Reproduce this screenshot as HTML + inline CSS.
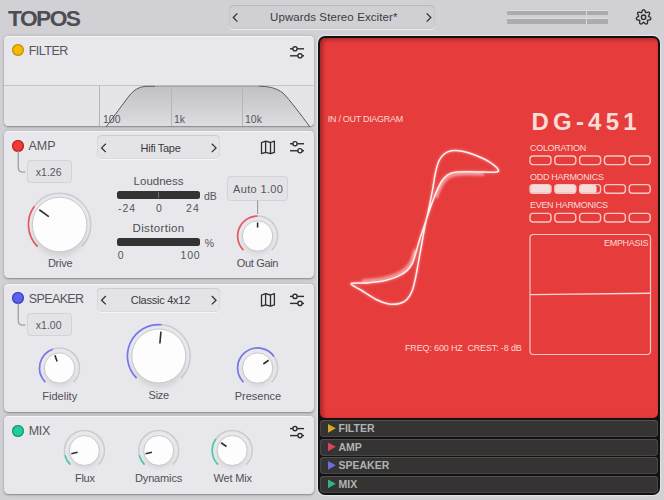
<!DOCTYPE html>
<html><head><meta charset="utf-8">
<style>
*{box-sizing:border-box;margin:0;padding:0}
html,body{width:664px;height:500px;overflow:hidden}
body{background:#d1d1d5;font-family:"Liberation Sans",sans-serif;color:#4e4e54;position:relative}
.a{position:absolute}
.t{position:absolute;white-space:nowrap;line-height:1}
.panel{position:absolute;left:4px;width:309.5px;background:#e8e8ec;border-radius:4.5px;box-shadow:0 1px 1.5px rgba(0,0,0,0.24),0 0.5px 3.5px rgba(0,0,0,0.16),inset 0 1px 0 rgba(255,255,255,0.55)}
.sel{position:absolute;border-radius:4.5px;background:#e4e4e8;box-shadow:inset 0 1px 1px rgba(0,0,0,0.07),inset 0 0 0 1px rgba(0,0,0,0.045),0 1px 0 rgba(255,255,255,0.6)}
.vbox{position:absolute;border-radius:4px;background:#e4e4e8;box-shadow:inset 0 0 0 1px rgba(0,0,0,0.07)}
.dot{position:absolute;width:12px;height:12px;border-radius:50%}
.hdr{font-size:12.5px;color:#55555b}
.lbl{font-size:11px;color:#4f4f55}
.num{font-size:10.5px;color:#55555b}
.red{position:absolute;left:320px;top:38px;width:338px;height:380px;background:#e73c3c;border-radius:5px;box-shadow:inset 2.5px 1.5px 4px rgba(60,0,0,0.4)}
.rt{position:absolute;white-space:nowrap;line-height:1;color:#fbdad4;font-size:9px;letter-spacing:-0.3px}
.bar{position:absolute;left:320px;width:338px;height:17px;background:#353433;border-radius:4px;box-shadow:inset 0 1px 0 #505052,inset 0 0 0 1px #464648}
.bt{position:absolute;left:338.5px;font-size:10.5px;font-weight:bold;color:#b2b2b4;line-height:1;white-space:nowrap}
.meter{position:absolute;left:117.3px;width:82.6px;height:8px;background:#333333;border-radius:2.5px}
</style></head><body>

<!-- top bar -->
<div class="t" style="left:8px;top:6.7px;font-size:22.8px;font-weight:bold;color:#4d4d53;letter-spacing:-1.6px">TOPOS</div>
<div class="sel" style="left:229px;top:5.2px;width:205.5px;height:23.5px;background:#d0d0d4"></div>
<div class="t" style="left:270px;top:12px;font-size:11.5px;color:#3a3a40;letter-spacing:0.1px">Upwards Stereo Exciter*</div>

<!-- meters -->
<div class="a" style="left:507.3px;top:10.8px;width:101px;height:4.3px;background:#acacb0;box-shadow:0 -0.7px 0 rgba(255,255,255,0.35)"></div>
<div class="a" style="left:507.3px;top:19.3px;width:101px;height:4.3px;background:#acacb0;box-shadow:0 -0.7px 0 rgba(255,255,255,0.35)"></div>
<div class="a" style="left:586.1px;top:10.8px;width:0.7px;height:12.8px;background:#d8d8dc"></div>

<!-- FILTER panel -->
<div class="panel" style="top:35.7px;height:90.3px;overflow:hidden">
  <div class="a" style="left:0;top:49.8px;width:309.5px;height:41px;background:#e5e5e9;border-top:1px solid #c4c4c8"></div>
</div>
<svg class="a" style="left:0;top:0" width="664" height="500" viewBox="0 0 664 500"><defs><linearGradient id="fg" x1="0" y1="0" x2="0" y2="1">
<stop offset="0" stop-color="#000" stop-opacity="0.16"/><stop offset="1" stop-color="#000" stop-opacity="0.03"/></linearGradient></defs>
<path d="M106 127 L126 100 C131 93 136 87 146 86.3 L261 86.3 C270 86.5 277 88.5 283 93 C290 100 301 115 310 127 Z" fill="url(#fg)"/>
<path d="M155 86.3 L259 86.3" fill="none" stroke="#9a9a9f" stroke-width="1"/><path d="M106 127 L126 100 C131 93 136 87 146 86.3 L155 86.3" fill="none" stroke="#5a5a60" stroke-width="1"/><path d="M259 86.2 L261 86.3 C270 86.5 277 88.5 283 93 C290 100 301 115 310 127" fill="none" stroke="#5a5a60" stroke-width="1"/>
<g stroke="#b6b6ba" stroke-width="1"><line x1="99.5" y1="86" x2="99.5" y2="126"/><line x1="171.5" y1="86" x2="171.5" y2="126"/><line x1="242.5" y1="86" x2="242.5" y2="126"/></g></svg>
<div class="dot" style="left:12.3px;top:44.4px;background:#f7ba00;box-shadow:inset 0 0 0 1.3px #c29410"></div>
<div class="t hdr" style="left:28.7px;top:45.3px;letter-spacing:-0.5px">FILTER</div>
<div class="t num" style="left:103px;top:114px">100</div>
<div class="t num" style="left:174px;top:114px">1k</div>
<div class="t num" style="left:245px;top:114px">10k</div>

<!-- AMP panel -->
<div class="panel" style="top:131px;height:146.8px"></div>
<div class="dot" style="left:12.4px;top:139.6px;background:#f23a3a;box-shadow:inset 0 0 0 1.3px #bf2727"></div>
<div class="t hdr" style="left:28.5px;top:140px">AMP</div>
<div class="sel" style="left:97.4px;top:135.3px;width:122.3px;height:23.6px"></div>
<div class="t" style="left:140.6px;top:143px;font-size:11px;color:#3a3a40;letter-spacing:-0.3px">Hifi Tape</div>
<div class="vbox" style="left:26.5px;top:160px;width:45px;height:23px"></div>
<div class="t num" style="left:35.8px;top:167px">x1.26</div>
<div class="t lbl" style="left:133.6px;top:176px;font-size:11.5px">Loudness</div>
<div class="meter" style="top:190.8px"></div>
<div class="a" style="left:158px;top:191.5px;width:1px;height:6.5px;background:#6a6a6e"></div>
<div class="t num" style="left:204px;top:190.5px">dB</div>
<div class="t num" style="left:118px;top:203px;letter-spacing:1px">-24</div>
<div class="t num" style="left:156px;top:203px">0</div>
<div class="t num" style="left:186px;top:203px;letter-spacing:1.2px">24</div>
<div class="t lbl" style="left:132.5px;top:223px;font-size:11.5px;letter-spacing:0.35px">Distortion</div>
<div class="meter" style="top:238.3px"></div>
<div class="t num" style="left:204.8px;top:237.8px">%</div>
<div class="t num" style="left:117.7px;top:250px">0</div>
<div class="t num" style="left:180.5px;top:250px;letter-spacing:0.8px">100</div>
<div class="vbox" style="left:227.3px;top:176.3px;width:61px;height:24.3px"></div>
<div class="t num" style="left:233px;top:184px;font-size:11px;letter-spacing:0.35px">Auto 1.00</div>
<div class="t lbl" style="left:47.9px;top:258px;letter-spacing:-0.25px">Drive</div>
<div class="t lbl" style="left:236.8px;top:258px;letter-spacing:-0.35px">Out Gain</div>

<!-- SPEAKER panel -->
<div class="panel" style="top:284px;height:127.5px"></div>
<div class="dot" style="left:12.4px;top:292px;background:#5e62f2;box-shadow:inset 0 0 0 1.3px #4044bb"></div>
<div class="t hdr" style="left:28.7px;top:292.5px;letter-spacing:-0.6px">SPEAKER</div>
<div class="sel" style="left:97.4px;top:288.3px;width:122.3px;height:23.6px"></div>
<div class="t" style="left:130.7px;top:295px;font-size:11px;color:#3a3a40;letter-spacing:-0.25px">Classic 4x12</div>
<div class="vbox" style="left:26.5px;top:313.2px;width:45px;height:23px"></div>
<div class="t num" style="left:35.8px;top:319.5px">x1.00</div>
<div class="t lbl" style="left:42.3px;top:390.5px">Fidelity</div>
<div class="t lbl" style="left:148.6px;top:390px;letter-spacing:-0.3px">Size</div>
<div class="t lbl" style="left:234.7px;top:390.5px">Presence</div>

<!-- MIX panel -->
<div class="panel" style="top:416px;height:78px"></div>
<div class="dot" style="left:12.4px;top:424.8px;background:#25cc9e;box-shadow:inset 0 0 0 1.3px #179a76"></div>
<div class="t hdr" style="left:28.7px;top:425.3px;letter-spacing:-0.3px">MIX</div>
<div class="t lbl" style="left:75px;top:473px;letter-spacing:-0.3px">Flux</div>
<div class="t lbl" style="left:135px;top:473px;letter-spacing:-0.15px">Dynamics</div>
<div class="t lbl" style="left:213.4px;top:473px;letter-spacing:-0.15px">Wet Mix</div>

<svg class="a" style="left:0;top:0" width="664" height="500" viewBox="0 0 664 500">
<defs><filter id="blur" x="-50%" y="-50%" width="200%" height="200%"><feGaussianBlur stdDeviation="2"/></filter>
<filter id="blur2" x="-20%" y="-20%" width="140%" height="140%"><feGaussianBlur stdDeviation="1.2"/></filter></defs>
<polygon points="643.60,9.80 643.89,9.83 644.17,9.93 644.44,10.10 644.69,10.34 644.90,10.68 645.04,11.20 645.22,11.47 645.35,11.82 645.46,12.17 645.56,12.46 645.70,12.65 645.88,12.73 646.12,12.70 646.42,12.59 646.77,12.46 647.12,12.35 647.43,12.34 647.95,12.10 648.34,12.07 648.67,12.13 648.96,12.24 649.21,12.41 649.41,12.62 649.56,12.87 649.65,13.16 649.68,13.48 649.63,13.82 649.48,14.21 649.19,14.62 649.07,14.94 648.87,15.26 648.67,15.55 648.52,15.81 648.47,16.03 648.54,16.22 648.73,16.39 649.01,16.56 649.33,16.75 649.63,16.96 649.80,17.20 650.34,17.46 650.59,17.75 650.75,18.05 650.83,18.35 650.84,18.64 650.79,18.93 650.68,19.20 650.50,19.44 650.26,19.66 649.95,19.83 649.53,19.93 649.06,19.98 648.73,20.07 648.35,20.11 648.00,20.14 647.72,20.19 647.53,20.30 647.44,20.48 647.43,20.74 647.48,21.08 647.53,21.45 647.54,21.81 647.54,22.20 647.59,22.70 647.51,23.06 647.37,23.35 647.18,23.60 646.96,23.79 646.70,23.92 646.41,23.99 646.11,23.99 645.79,23.93 645.46,23.78 645.11,23.48 644.79,23.18 644.51,22.96 644.25,22.69 644.01,22.44 643.80,22.26 643.60,22.20 643.40,22.26 643.19,22.44 642.95,22.69 642.69,22.96 642.41,23.18 642.09,23.48 641.74,23.78 641.41,23.93 641.09,23.99 640.79,23.99 640.50,23.92 640.24,23.79 640.02,23.60 639.83,23.35 639.69,23.06 639.61,22.70 639.66,22.20 639.66,21.81 639.67,21.45 639.72,21.08 639.77,20.74 639.76,20.48 639.67,20.30 639.48,20.19 639.20,20.14 638.85,20.11 638.47,20.07 638.14,19.98 637.67,19.93 637.25,19.83 636.94,19.66 636.70,19.44 636.52,19.20 636.41,18.93 636.36,18.64 636.37,18.35 636.45,18.05 636.61,17.75 636.86,17.46 637.40,17.20 637.57,16.96 637.87,16.75 638.19,16.56 638.47,16.39 638.66,16.22 638.73,16.03 638.68,15.81 638.53,15.55 638.33,15.26 638.13,14.94 638.01,14.62 637.72,14.21 637.57,13.82 637.52,13.48 637.55,13.16 637.64,12.87 637.79,12.62 637.99,12.41 638.24,12.24 638.53,12.13 638.86,12.07 639.25,12.10 639.77,12.34 640.08,12.35 640.43,12.46 640.78,12.59 641.08,12.70 641.32,12.73 641.50,12.65 641.64,12.46 641.74,12.17 641.85,11.82 641.98,11.47 642.16,11.20 642.30,10.68 642.51,10.34 642.76,10.10 643.03,9.93 643.31,9.83" fill="none" stroke="#2e2e32" stroke-width="1.35" stroke-linejoin="round"/><circle cx="643.6" cy="17.2" r="2.2" fill="none" stroke="#2e2e32" stroke-width="1.35"/>
<path d="M37.54 246.56A31.2 31.2 0 1 1 81.66 246.56" fill="none" stroke="#cbcbcf" stroke-width="1.5"/>
<path d="M37.54 246.56A31.2 31.2 0 0 1 34.36 206.16" fill="none" stroke="#e65a60" stroke-width="1.65"/>
<circle cx="59.6" cy="229.96" r="27.30" fill="rgba(0,0,0,0.08)" filter="url(#blur)"/>
<circle cx="59.6" cy="224.5" r="27.3" fill="#fdfdfd" stroke="#c8c8cc" stroke-width="1"/>
<line x1="48.84" y1="216.68" x2="39.29" y2="209.75" stroke="#2e2e32" stroke-width="1.6" stroke-linecap="butt"/>
<path d="M243.46 250.14A20 20 0 1 1 271.74 250.14" fill="none" stroke="#cbcbcf" stroke-width="1.5"/>
<path d="M243.46 250.14A20 20 0 0 1 257.60 216.00" fill="none" stroke="#e65a60" stroke-width="1.65"/>
<circle cx="257.6" cy="239.04" r="15.20" fill="rgba(0,0,0,0.08)" filter="url(#blur)"/>
<circle cx="257.6" cy="236" r="15.2" fill="#fdfdfd" stroke="#c8c8cc" stroke-width="1"/>
<line x1="257.60" y1="227.50" x2="257.60" y2="222.50" stroke="#2e2e32" stroke-width="1.6" stroke-linecap="butt"/>
<path d="M45.36 382.14A20 20 0 1 1 73.64 382.14" fill="none" stroke="#cbcbcf" stroke-width="1.5"/>
<path d="M45.36 382.14A20 20 0 0 1 52.66 349.21" fill="none" stroke="#7477ee" stroke-width="1.65"/>
<circle cx="59.5" cy="371.04" r="15.20" fill="rgba(0,0,0,0.08)" filter="url(#blur)"/>
<circle cx="59.5" cy="368" r="15.2" fill="#fdfdfd" stroke="#c8c8cc" stroke-width="1"/>
<line x1="57.11" y1="361.42" x2="54.88" y2="355.31" stroke="#2e2e32" stroke-width="1.6" stroke-linecap="butt"/>
<path d="M136.60 378.20A31.4 31.4 0 1 1 181.00 378.20" fill="none" stroke="#cbcbcf" stroke-width="1.5"/>
<path d="M136.60 378.20A31.4 31.4 0 0 1 161.54 324.72" fill="none" stroke="#7477ee" stroke-width="1.65"/>
<circle cx="158.8" cy="361.40" r="27.00" fill="rgba(0,0,0,0.08)" filter="url(#blur)"/>
<circle cx="158.8" cy="356" r="27" fill="#fdfdfd" stroke="#c8c8cc" stroke-width="1"/>
<line x1="159.89" y1="343.55" x2="160.94" y2="331.59" stroke="#2e2e32" stroke-width="1.6" stroke-linecap="butt"/>
<path d="M243.46 382.14A20 20 0 1 1 271.74 382.14" fill="none" stroke="#cbcbcf" stroke-width="1.5"/>
<path d="M243.46 382.14A20 20 0 1 1 273.98 356.53" fill="none" stroke="#7477ee" stroke-width="1.65"/>
<circle cx="257.6" cy="371.04" r="15.20" fill="rgba(0,0,0,0.08)" filter="url(#blur)"/>
<circle cx="257.6" cy="368" r="15.2" fill="#fdfdfd" stroke="#c8c8cc" stroke-width="1"/>
<line x1="263.33" y1="363.98" x2="268.66" y2="360.26" stroke="#2e2e32" stroke-width="1.6" stroke-linecap="butt"/>
<path d="M70.26 464.64A20 20 0 1 1 98.54 464.64" fill="none" stroke="#cbcbcf" stroke-width="1.5"/>
<path d="M70.26 464.64A20 20 0 0 1 64.99 455.34" fill="none" stroke="#48cba8" stroke-width="1.65"/>
<circle cx="84.4" cy="453.50" r="15.00" fill="rgba(0,0,0,0.08)" filter="url(#blur)"/>
<circle cx="84.4" cy="450.5" r="15" fill="#fdfdfd" stroke="#c8c8cc" stroke-width="1"/>
<line x1="77.61" y1="452.19" x2="71.30" y2="453.77" stroke="#2e2e32" stroke-width="1.6" stroke-linecap="butt"/>
<path d="M144.56 464.64A20 20 0 1 1 172.84 464.64" fill="none" stroke="#cbcbcf" stroke-width="1.5"/>
<path d="M144.56 464.64A20 20 0 0 1 139.29 455.34" fill="none" stroke="#48cba8" stroke-width="1.65"/>
<circle cx="158.7" cy="453.50" r="15.00" fill="rgba(0,0,0,0.08)" filter="url(#blur)"/>
<circle cx="158.7" cy="450.5" r="15" fill="#fdfdfd" stroke="#c8c8cc" stroke-width="1"/>
<line x1="151.91" y1="452.19" x2="145.60" y2="453.77" stroke="#2e2e32" stroke-width="1.6" stroke-linecap="butt"/>
<path d="M218.06 464.64A20 20 0 1 1 246.34 464.64" fill="none" stroke="#cbcbcf" stroke-width="1.5"/>
<path d="M218.06 464.64A20 20 0 0 1 215.82 439.03" fill="none" stroke="#48cba8" stroke-width="1.65"/>
<circle cx="232.2" cy="453.50" r="15.00" fill="rgba(0,0,0,0.08)" filter="url(#blur)"/>
<circle cx="232.2" cy="450.5" r="15" fill="#fdfdfd" stroke="#c8c8cc" stroke-width="1"/>
<line x1="226.47" y1="446.48" x2="221.14" y2="442.76" stroke="#2e2e32" stroke-width="1.6" stroke-linecap="butt"/>
<g stroke="#2e2e32" stroke-width="1.4" fill="#f6f6f8">
<line x1="290" y1="48.8" x2="304" y2="48.8"/><line x1="290" y1="55.8" x2="304" y2="55.8"/>
<circle cx="295" cy="48.8" r="2.1"/><circle cx="300" cy="55.8" r="2.1"/></g>
<g stroke="#2e2e32" stroke-width="1.4" fill="#f6f6f8">
<line x1="290" y1="143.75" x2="304" y2="143.75"/><line x1="290" y1="150.75" x2="304" y2="150.75"/>
<circle cx="295" cy="143.75" r="2.1"/><circle cx="300" cy="150.75" r="2.1"/></g>
<g stroke="#2e2e32" stroke-width="1.4" fill="#f6f6f8">
<line x1="290" y1="296.4" x2="304" y2="296.4"/><line x1="290" y1="303.4" x2="304" y2="303.4"/>
<circle cx="295" cy="296.4" r="2.1"/><circle cx="300" cy="303.4" r="2.1"/></g>
<g stroke="#2e2e32" stroke-width="1.4" fill="#f6f6f8">
<line x1="290" y1="428.6" x2="304" y2="428.6"/><line x1="290" y1="435.6" x2="304" y2="435.6"/>
<circle cx="295" cy="428.6" r="2.1"/><circle cx="300" cy="435.6" r="2.1"/></g>
<g stroke="#2e2e32" stroke-width="1.3" fill="none" stroke-linejoin="round"><polygon points="261.50,142.60 265.60,141.20 270.50,142.50 274.40,141.20 274.40,152.40 270.50,153.60 265.60,152.40 261.50,153.60"/><line x1="265.60" y1="141.20" x2="265.60" y2="152.40"/><line x1="270.50" y1="142.50" x2="270.50" y2="153.60"/></g>
<g stroke="#2e2e32" stroke-width="1.3" fill="none" stroke-linejoin="round"><polygon points="261.50,295.10 265.60,293.70 270.50,295.00 274.40,293.70 274.40,304.90 270.50,306.10 265.60,304.90 261.50,306.10"/><line x1="265.60" y1="293.70" x2="265.60" y2="304.90"/><line x1="270.50" y1="295.00" x2="270.50" y2="306.10"/></g>
<polyline points="237.40,13.40 233.30,17.50 237.40,21.60" fill="none" stroke="#333338" stroke-width="1.3"/>
<polyline points="426.70,13.40 430.80,17.50 426.70,21.60" fill="none" stroke="#333338" stroke-width="1.3"/>
<polyline points="105.80,143.70 101.60,147.90 105.80,152.10" fill="none" stroke="#333338" stroke-width="1.3"/>
<polyline points="211.80,143.70 216.00,147.90 211.80,152.10" fill="none" stroke="#333338" stroke-width="1.3"/>
<polyline points="105.80,296.00 101.60,300.20 105.80,304.40" fill="none" stroke="#333338" stroke-width="1.3"/>
<polyline points="211.80,296.00 216.00,300.20 211.80,304.40" fill="none" stroke="#333338" stroke-width="1.3"/>
<path d="M18.3 151 V167.5 Q18.3 172.2 23 172.2 H25.5" fill="none" stroke="#a2a2a6" stroke-width="1.3"/>
<path d="M18.3 303.5 V320.5 Q18.3 325.2 23 325.2 H25.5" fill="none" stroke="#a2a2a6" stroke-width="1.3"/>
<line x1="257.6" y1="200.5" x2="257.6" y2="214" stroke="#9a9aa0" stroke-width="1.1"/>
</svg>

<!-- right display -->
<div class="a" style="left:317.6px;top:36px;width:342.6px;height:459px;background:#121212;border-radius:7px;box-shadow:0 0 0 1.2px rgba(255,255,255,0.4)"></div>
<div class="red"></div>
<div class="rt" style="left:327.8px;top:114.5px">IN / OUT DIAGRAM</div>
<div class="t" style="left:531.5px;top:109.6px;font-size:24px;font-weight:bold;color:#f8dcd8;letter-spacing:4.2px">DG-451</div>
<div class="rt" style="left:530px;top:143.5px">COLORATION</div>
<div class="rt" style="left:530px;top:172.5px">ODD HARMONICS</div>
<div class="rt" style="left:530px;top:201px">EVEN HARMONICS</div>
<div class="rt" style="left:604px;top:238.5px">EMPHASIS</div>
<div class="rt" style="left:405px;top:343.5px;letter-spacing:-0.15px">FREQ: 600 HZ &nbsp;CREST: -8 dB</div>
<svg class="a" style="left:0;top:0" width="664" height="500" viewBox="0 0 664 500">
<defs><filter id="blur2b" x="-20%" y="-20%" width="140%" height="140%"><feGaussianBlur stdDeviation="1"/></filter>
<filter id="blur3" x="-30%" y="-30%" width="160%" height="160%"><feGaussianBlur stdDeviation="1.3"/></filter></defs>
<g fill="none" stroke-linecap="round">
<path d="M498.40 171.20 C499.60 169.70 494.80 165.67 491.20 163.10 C487.60 160.53 481.62 157.77 476.80 155.80 C471.98 153.83 466.52 152.13 462.30 151.30 C458.08 150.47 454.52 150.35 451.50 150.80 C448.48 151.25 446.32 152.25 444.20 154.00 C442.08 155.75 440.30 157.98 438.80 161.30 C437.30 164.62 436.25 169.08 435.20 173.90 C434.15 178.72 433.55 184.47 432.50 190.20 C431.45 195.93 430.05 202.83 428.90 208.30 C427.75 213.77 426.62 218.05 425.60 223.00 C424.58 227.95 423.82 232.48 422.80 238.00 C421.78 243.52 420.65 249.77 419.50 256.10 C418.35 262.43 417.10 270.27 415.90 276.00 C414.70 281.73 413.80 286.58 412.30 290.50 C410.80 294.42 409.02 297.33 406.90 299.50 C404.78 301.67 402.62 302.75 399.60 303.50 C396.58 304.25 392.72 304.67 388.80 304.00 C384.88 303.33 380.62 301.75 376.10 299.50 C371.58 297.25 365.85 293.15 361.70 290.50 C357.55 287.85 350.30 284.87 351.20 283.60 C352.10 282.33 361.43 283.42 367.10 282.90 C372.77 282.38 380.08 281.58 385.20 280.50 C390.32 279.42 394.18 278.05 397.80 276.40 C401.42 274.75 404.48 272.77 406.90 270.60 C409.32 268.43 410.80 266.42 412.30 263.40 C413.80 260.38 414.70 256.42 415.90 252.50 C417.10 248.58 418.03 244.57 419.50 239.90 C420.97 235.23 423.13 229.17 424.70 224.50 C426.27 219.83 427.45 216.12 428.90 211.90 C430.35 207.68 431.90 203.12 433.40 199.20 C434.90 195.28 436.40 191.57 437.90 188.40 C439.40 185.23 440.75 182.47 442.40 180.20 C444.05 177.93 445.38 176.15 447.80 174.80 C450.22 173.45 453.28 172.62 456.90 172.10 C460.52 171.58 464.98 171.70 469.50 171.70 C474.02 171.70 479.18 172.18 484.00 172.10 C488.82 172.02 497.20 172.70 498.40 171.20Z" stroke="#fff" stroke-opacity="0.28" stroke-width="3" filter="url(#blur2b)"/>
<g transform="translate(0.7 1.6)"><path d="M435.60 194.50 C435.98 193.48 436.77 190.78 437.90 188.40 C439.03 186.02 440.75 182.47 442.40 180.20 C444.05 177.93 445.38 176.15 447.80 174.80 C450.22 173.45 453.28 172.62 456.90 172.10 C460.52 171.58 465.32 171.72 469.50 171.70 C473.68 171.68 479.92 171.95 482.00 172.00" stroke="#fff" stroke-opacity="0.45" stroke-width="2.5" filter="url(#blur3)"/></g>
<g transform="translate(1.4 3.0)"><path d="M435.60 194.50 C435.98 193.48 436.77 190.78 437.90 188.40 C439.03 186.02 440.75 182.47 442.40 180.20 C444.05 177.93 445.38 176.15 447.80 174.80 C450.22 173.45 453.28 172.62 456.90 172.10 C460.52 171.58 465.32 171.72 469.50 171.70 C473.68 171.68 479.92 171.95 482.00 172.00" stroke="#fff" stroke-opacity="0.25" stroke-width="2.5" filter="url(#blur3)"/></g>
<g transform="translate(-0.7 -1.6)"><path d="M364.00 283.00 C365.83 282.83 371.47 282.42 375.00 282.00 C378.53 281.58 381.40 281.43 385.20 280.50 C389.00 279.57 394.18 278.05 397.80 276.40 C401.42 274.75 404.48 272.77 406.90 270.60 C409.32 268.43 410.80 266.42 412.30 263.40 C413.80 260.38 415.30 254.32 415.90 252.50" stroke="#fff" stroke-opacity="0.45" stroke-width="2.5" filter="url(#blur3)"/></g>
<g transform="translate(-1.4 -3.0)"><path d="M364.00 283.00 C365.83 282.83 371.47 282.42 375.00 282.00 C378.53 281.58 381.40 281.43 385.20 280.50 C389.00 279.57 394.18 278.05 397.80 276.40 C401.42 274.75 404.48 272.77 406.90 270.60 C409.32 268.43 410.80 266.42 412.30 263.40 C413.80 260.38 415.30 254.32 415.90 252.50" stroke="#fff" stroke-opacity="0.25" stroke-width="2.5" filter="url(#blur3)"/></g>
<path d="M498.40 171.20 C499.60 169.70 494.80 165.67 491.20 163.10 C487.60 160.53 481.62 157.77 476.80 155.80 C471.98 153.83 466.52 152.13 462.30 151.30 C458.08 150.47 454.52 150.35 451.50 150.80 C448.48 151.25 446.32 152.25 444.20 154.00 C442.08 155.75 440.30 157.98 438.80 161.30 C437.30 164.62 436.25 169.08 435.20 173.90 C434.15 178.72 433.55 184.47 432.50 190.20 C431.45 195.93 430.05 202.83 428.90 208.30 C427.75 213.77 426.62 218.05 425.60 223.00 C424.58 227.95 423.82 232.48 422.80 238.00 C421.78 243.52 420.65 249.77 419.50 256.10 C418.35 262.43 417.10 270.27 415.90 276.00 C414.70 281.73 413.80 286.58 412.30 290.50 C410.80 294.42 409.02 297.33 406.90 299.50 C404.78 301.67 402.62 302.75 399.60 303.50 C396.58 304.25 392.72 304.67 388.80 304.00 C384.88 303.33 380.62 301.75 376.10 299.50 C371.58 297.25 365.85 293.15 361.70 290.50 C357.55 287.85 350.30 284.87 351.20 283.60 C352.10 282.33 361.43 283.42 367.10 282.90 C372.77 282.38 380.08 281.58 385.20 280.50 C390.32 279.42 394.18 278.05 397.80 276.40 C401.42 274.75 404.48 272.77 406.90 270.60 C409.32 268.43 410.80 266.42 412.30 263.40 C413.80 260.38 414.70 256.42 415.90 252.50 C417.10 248.58 418.03 244.57 419.50 239.90 C420.97 235.23 423.13 229.17 424.70 224.50 C426.27 219.83 427.45 216.12 428.90 211.90 C430.35 207.68 431.90 203.12 433.40 199.20 C434.90 195.28 436.40 191.57 437.90 188.40 C439.40 185.23 440.75 182.47 442.40 180.20 C444.05 177.93 445.38 176.15 447.80 174.80 C450.22 173.45 453.28 172.62 456.90 172.10 C460.52 171.58 464.98 171.70 469.50 171.70 C474.02 171.70 479.18 172.18 484.00 172.10 C488.82 172.02 497.20 172.70 498.40 171.20Z" stroke="#fff2ee" stroke-width="1.5"/>
</g>
<rect x="530.00" y="156" width="21" height="8.6" rx="3" fill="none" stroke="#f6c9c2" stroke-width="1.4"/>
<rect x="554.80" y="156" width="21" height="8.6" rx="3" fill="none" stroke="#f6c9c2" stroke-width="1.4"/>
<rect x="579.60" y="156" width="21" height="8.6" rx="3" fill="none" stroke="#f6c9c2" stroke-width="1.4"/>
<rect x="604.40" y="156" width="21" height="8.6" rx="3" fill="none" stroke="#f6c9c2" stroke-width="1.4"/>
<rect x="629.20" y="156" width="21" height="8.6" rx="3" fill="none" stroke="#f6c9c2" stroke-width="1.4"/>
<rect x="530.00" y="184.6" width="21" height="8.6" rx="3" fill="none" stroke="#f6c9c2" stroke-width="1.4"/>
<rect x="530.40" y="185.0" width="20.20" height="7.8" rx="2.6" fill="#f5dcda"/>
<rect x="554.80" y="184.6" width="21" height="8.6" rx="3" fill="none" stroke="#f6c9c2" stroke-width="1.4"/>
<rect x="555.20" y="185.0" width="20.20" height="7.8" rx="2.6" fill="#f5dcda"/>
<rect x="579.60" y="184.6" width="21" height="8.6" rx="3" fill="none" stroke="#f6c9c2" stroke-width="1.4"/>
<rect x="580.00" y="185.0" width="16.56" height="7.8" rx="2.6" fill="#f5dcda"/>
<rect x="604.40" y="184.6" width="21" height="8.6" rx="3" fill="none" stroke="#f6c9c2" stroke-width="1.4"/>
<rect x="629.20" y="184.6" width="21" height="8.6" rx="3" fill="none" stroke="#f6c9c2" stroke-width="1.4"/>
<rect x="530.00" y="213.4" width="21" height="8.6" rx="3" fill="none" stroke="#f6c9c2" stroke-width="1.4"/>
<rect x="554.80" y="213.4" width="21" height="8.6" rx="3" fill="none" stroke="#f6c9c2" stroke-width="1.4"/>
<rect x="579.60" y="213.4" width="21" height="8.6" rx="3" fill="none" stroke="#f6c9c2" stroke-width="1.4"/>
<rect x="604.40" y="213.4" width="21" height="8.6" rx="3" fill="none" stroke="#f6c9c2" stroke-width="1.4"/>
<rect x="629.20" y="213.4" width="21" height="8.6" rx="3" fill="none" stroke="#f6c9c2" stroke-width="1.4"/>
<rect x="530" y="234.5" width="120.5" height="120" rx="3.5" fill="none" stroke="#f6c9c2" stroke-width="1.2"/>
<path d="M530.5 294.6 L650 293.2" stroke="#f8d8d2" stroke-width="1.4"/>
</svg>
<div class="bar" style="top:420px"></div>
<div class="bar" style="top:438.5px"></div>
<div class="bar" style="top:457px"></div>
<div class="bar" style="top:475.5px"></div>
<svg class="a" style="left:0;top:0" width="664" height="500">
<polygon points="328,423.9 335.8,428.3 328,432.7" fill="#d6aa22"/>
<polygon points="328,442.4 335.8,446.8 328,451.2" fill="#d8445a"/>
<polygon points="328,460.9 335.8,465.3 328,469.7" fill="#6c6ce0"/>
<polygon points="328,479.4 335.8,483.8 328,488.2" fill="#2fb585"/>
</svg>
<div class="bt" style="top:423.4px">FILTER</div>
<div class="bt" style="top:441.9px">AMP</div>
<div class="bt" style="top:460.4px">SPEAKER</div>
<div class="bt" style="top:478.9px">MIX</div>

</body></html>
